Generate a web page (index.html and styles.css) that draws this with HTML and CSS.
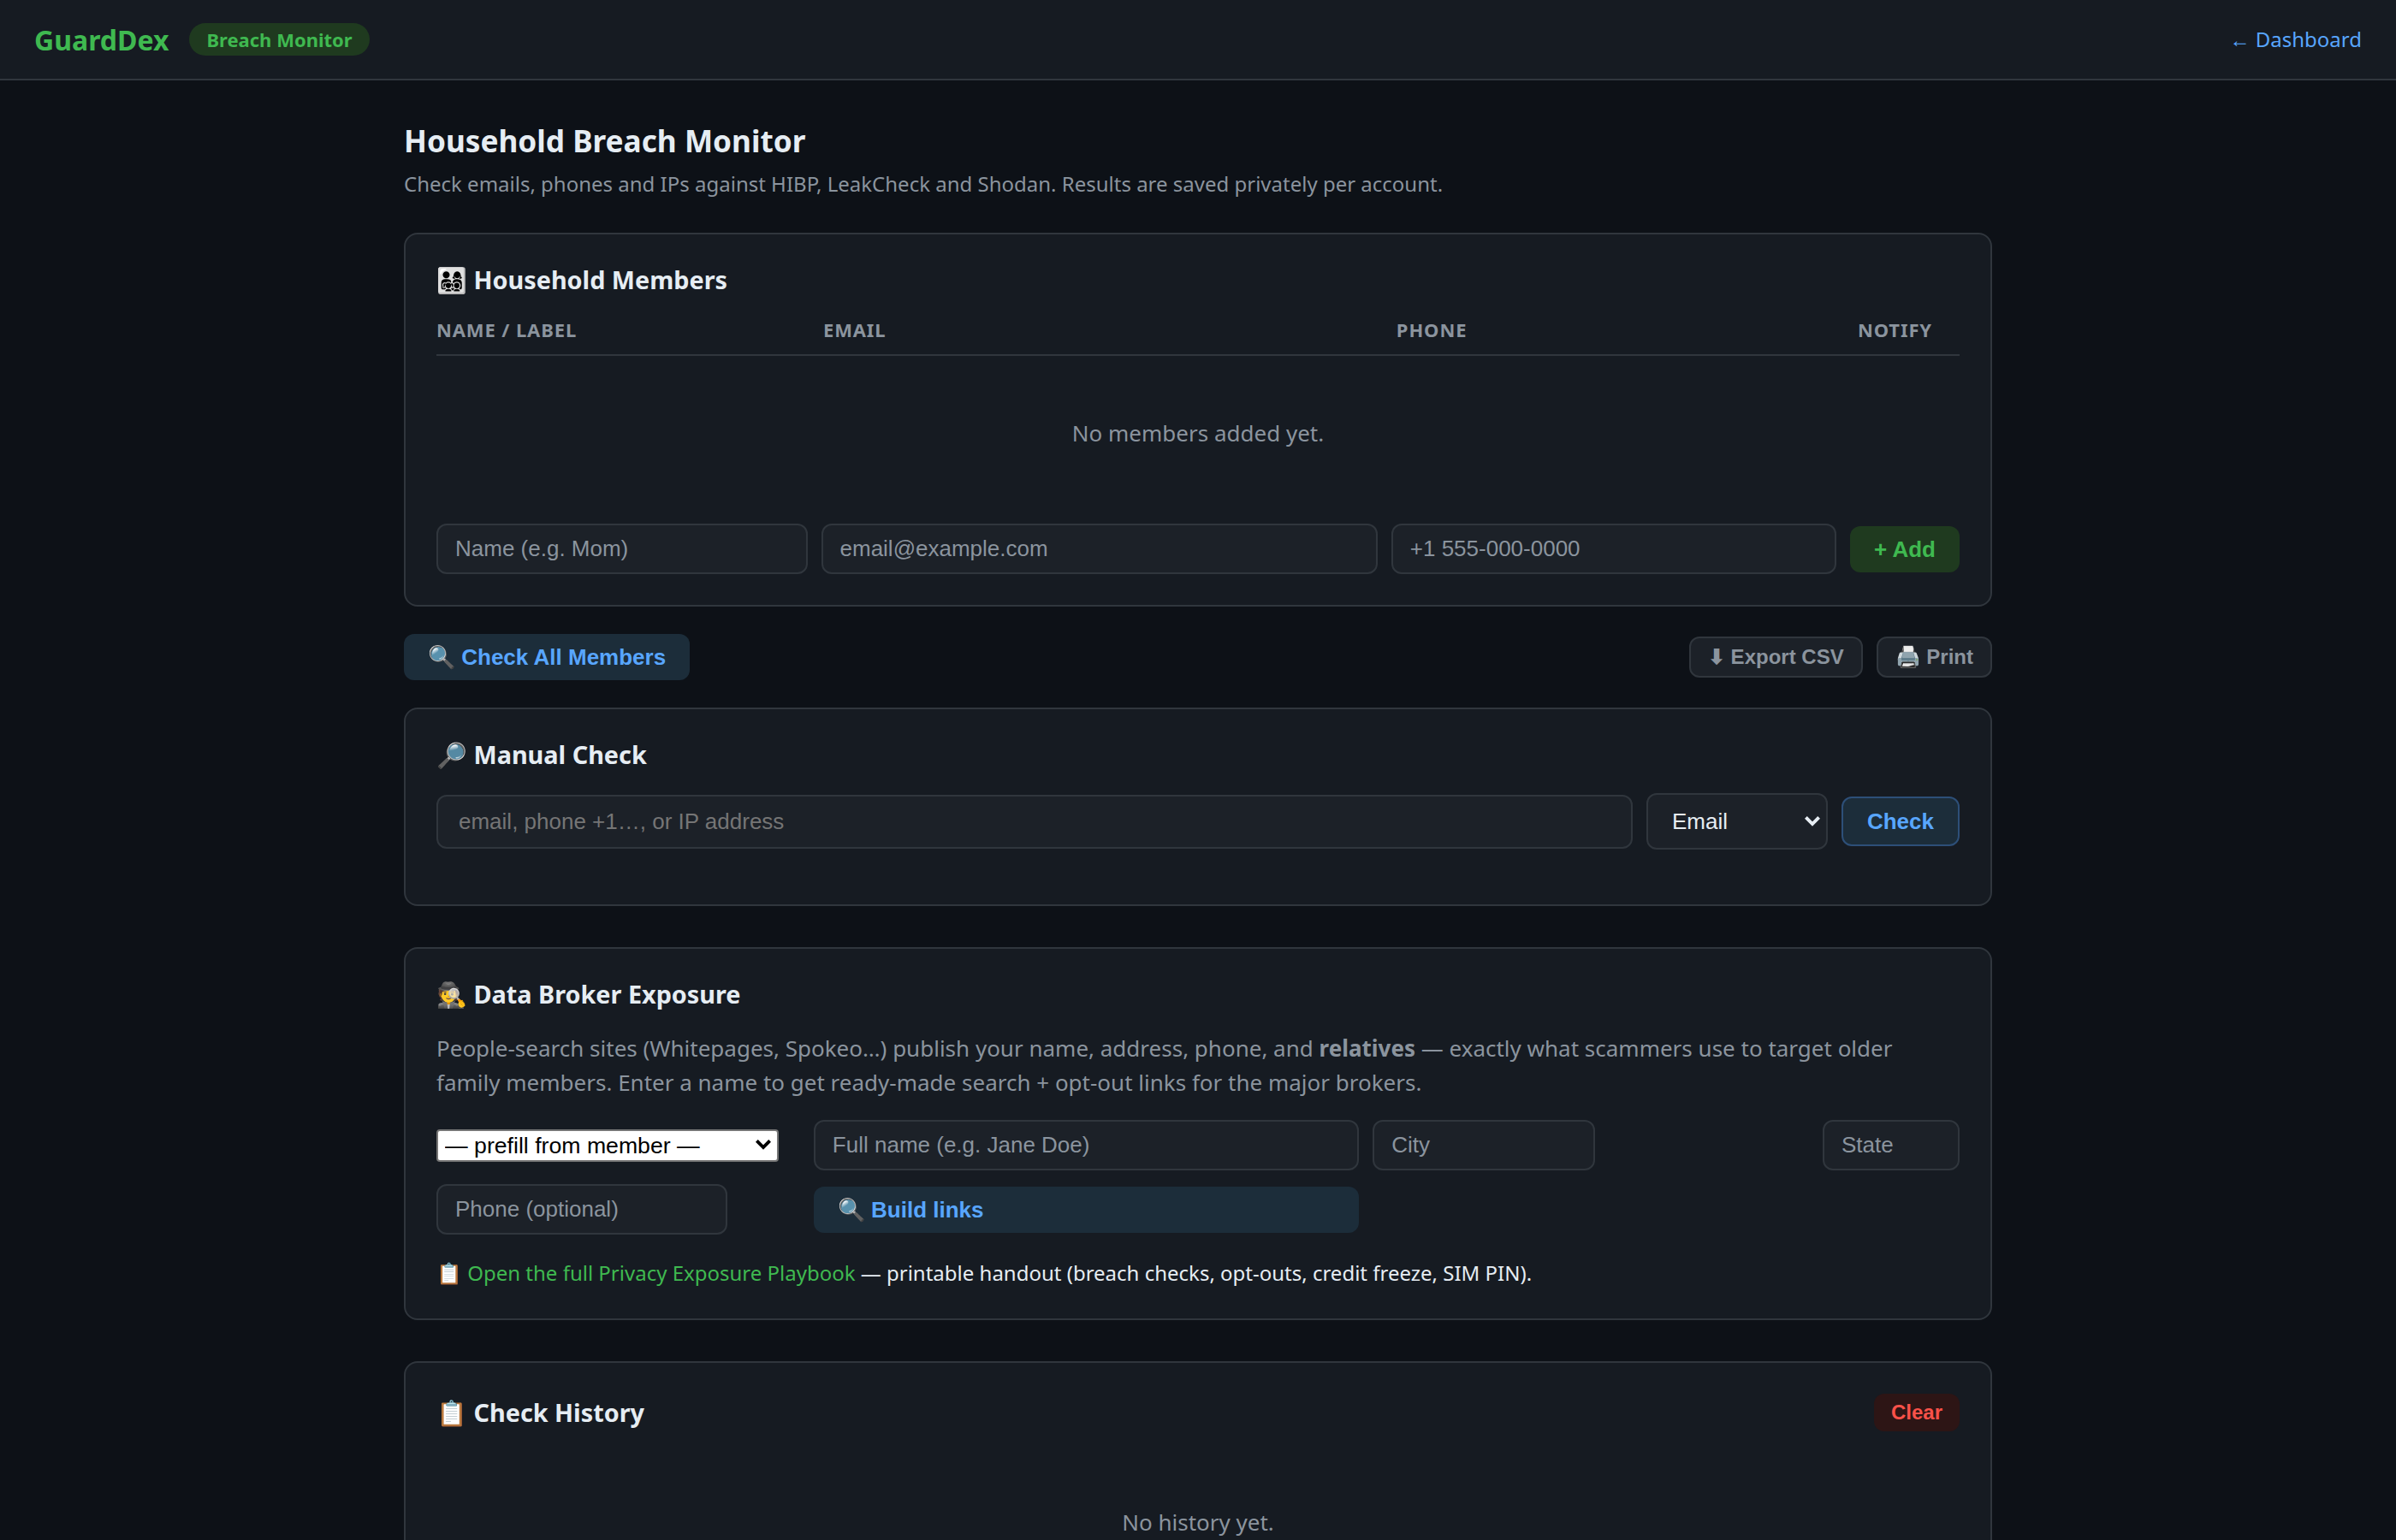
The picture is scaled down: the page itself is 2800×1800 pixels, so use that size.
FILE: index.html
```html
<!DOCTYPE html>
<html lang="en">
<head>
    <meta charset="UTF-8">
    <meta name="viewport" content="width=device-width, initial-scale=1.0">
    <title>GuardDex - Breach Monitor</title>
    <link rel="stylesheet" href="styles.css">
</head>
<body>
    <header class="topbar">
        <span class="logo">GuardDex</span>
        <span class="badge">Breach Monitor</span>
        <a class="back" href="#">← Dashboard</a>
    </header>

    <main class="wrap">
        <h1>Household Breach Monitor</h1>
        <p class="sub">Check emails, phones and IPs against HIBP, LeakCheck and Shodan. Results are saved privately per account.</p>

        <section class="card">
            <h2>👨‍👩‍👧‍👦 Household Members</h2>
            <div class="member-head">
                <span>Name / Label</span>
                <span>Email</span>
                <span>Phone</span>
                <span>Notify</span>
                <span></span>
            </div>
            <div class="empty members-empty">No members added yet.</div>
            <div class="add-row">
                <input type="text" class="field" placeholder="Name (e.g. Mom)">
                <input type="email" class="field" placeholder="email@example.com">
                <input type="tel" class="field" placeholder="+1 555-000-0000">
                <button class="btn btn-green">+ Add</button>
            </div>
        </section>

        <div class="toolbar">
            <button class="btn btn-blue">🔍 Check All Members</button>
            <div class="toolbar-right">
                <button class="btn btn-sm btn-ghost">⬇ Export CSV</button>
                <button class="btn btn-sm btn-ghost">🖨️ Print</button>
            </div>
        </div>

        <section class="card manual">
            <h2>🔎 Manual Check</h2>
            <div class="manual-row">
                <input type="text" class="manual-input" placeholder="email, phone +1…, or IP address">
                <select class="manual-type">
                    <option>Email</option>
                    <option>Phone</option>
                    <option>IP Address</option>
                </select>
                <button class="btn btn-blue btn-outline">Check</button>
            </div>
            <div class="manual-result"></div>
        </section>

        <section class="card">
            <h2>🕵️ Data Broker Exposure</h2>
            <p class="intro">People-search sites (Whitepages, Spokeo…) publish your name, address, phone, and <strong>relatives</strong> — exactly what scammers use to target older family members. Enter a name to get ready-made search + opt-out links for the major brokers.</p>
            <div class="add-row broker-row">
                <select class="prefill">
                    <option>— prefill from member —</option>
                </select>
                <input type="text" class="field" placeholder="Full name (e.g. Jane Doe)">
                <input type="text" class="field city" placeholder="City">
                <input type="text" class="field state" placeholder="State">
                <input type="text" class="field phone" placeholder="Phone (optional)">
                <button class="btn btn-blue">🔍 Build links</button>
            </div>
            <div class="playbook">📋 <a href="#">Open the full Privacy Exposure Playbook</a> — printable handout (breach checks, opt-outs, credit freeze, SIM PIN).</div>
        </section>

        <section class="card">
            <div class="card-head">
                <h2>📋 Check History</h2>
                <button class="btn btn-sm btn-red">Clear</button>
            </div>
            <div class="empty">No history yet.</div>
        </section>
    </main>
</body>
</html>
```
FILE: styles.css
```css
:root {
    --bg: #0d1117;
    --surface: #161b22;
    --surface2: #1c2128;
    --border: #30363d;
    --text: #e6edf3;
    --muted: #8b949e;
    --green: #3fb950;
    --blue: #58a6ff;
    --red: #f85149;
}
* {
    box-sizing: border-box;
    margin: 0;
    padding: 0;
}
html {
    zoom: 2;
}
body {
    background: var(--bg);
    color: var(--text);
    font-family: "Noto Sans", sans-serif;
    font-size: 14px;
    height: 900px;
    overflow: hidden;
}
a {
    text-decoration: none;
}
button, input, select {
    font-family: "Liberation Sans", Arial, sans-serif;
}

/* header */
.topbar {
    display: flex;
    align-items: center;
    gap: 12px;
    height: 47px;
    padding: 0 20px;
    background: var(--surface);
    border-bottom: 1px solid var(--border);
}
.logo {
    font-size: 16px;
    font-weight: 700;
    color: var(--green);
}
.badge {
    padding: 2px 10px;
    border-radius: 10px;
    background: #1f3a1f;
    color: var(--green);
    font-size: 11px;
    font-weight: 700;
}
.back {
    margin-left: auto;
    color: var(--blue);
    font-size: 12px;
    line-height: 18px;
}

/* page */
.wrap {
    max-width: 960px;
    margin: 0 auto;
    padding: 24px 16px;
}
h1 {
    margin-bottom: 6px;
    font-size: 1.1rem;
    font-weight: 700;
    line-height: 22px;
}
.sub {
    margin-bottom: 20px;
    color: var(--muted);
    font-size: 12px;
    line-height: 17px;
}
.card {
    padding: 18px;
    background: var(--surface);
    border: 1px solid var(--border);
    border-radius: 8px;
}
.card + .card {
    margin-top: 24px;
}
h2 {
    margin-bottom: 13px;
    font-size: 0.9rem;
    font-weight: 700;
    line-height: 17px;
}
.empty {
    padding: 32px;
    text-align: center;
    color: var(--muted);
    font-size: 13px;
    line-height: 18px;
}

/* buttons and fields */
.btn {
    display: inline-flex;
    align-items: center;
    gap: 6px;
    padding: 6px 14px;
    border: none;
    border-radius: 6px;
    font-size: 13px;
    font-weight: 600;
    line-height: 15px;
    cursor: pointer;
}
.btn-sm {
    padding: 4px 10px;
    font-size: 12px;
    line-height: 14px;
}
.btn-green {
    background: #1f3a1f;
    color: var(--green);
}
.btn-blue {
    background: #1c2d3a;
    color: var(--blue);
}
.btn-red {
    background: #2d1515;
    color: var(--red);
}
.btn-ghost {
    background: var(--surface2);
    border: 1px solid var(--border);
    color: var(--muted);
}
.btn-outline {
    border: 1px solid #2d4f78;
}
.field {
    width: 100%;
    padding: 6px 10px;
    background: var(--surface2);
    border: 1px solid var(--border);
    border-radius: 6px;
    color: var(--text);
    font-size: 13px;
}
.field::placeholder {
    color: var(--muted);
}

/* members */
.member-head {
    display: grid;
    grid-template-columns: 1fr 1.5fr 1.2fr auto 8px;
    gap: 8px;
    padding-bottom: 7px;
    border-bottom: 1px solid var(--border);
    color: var(--muted);
    font-size: 11px;
    font-weight: 700;
    line-height: 15px;
    letter-spacing: 0.04em;
    text-transform: uppercase;
}
.members-empty {
    padding: 36px 0 44px;
}
.add-row {
    display: grid;
    grid-template-columns: 1fr 1.5fr 1.2fr auto;
    gap: 8px;
    align-items: center;
}
.toolbar {
    display: flex;
    align-items: center;
    justify-content: space-between;
    margin: 16px 0;
}
.toolbar-right {
    display: flex;
    gap: 8px;
}

/* manual check */
.manual h2 {
    margin-bottom: 14px;
}
.manual-row {
    display: flex;
    align-items: center;
    gap: 8px;
}
.manual-input, .manual-type {
    background: var(--surface2);
    border: 1px solid var(--border);
    border-radius: 6px;
    color: var(--text);
    font-size: 13px;
}
.manual-input {
    flex: 1;
    padding: 7px 12px;
}
.manual-type {
    width: 106px;
    height: 33px;
    padding: 7px 14px;
    appearance: none;
    background: var(--surface2) url("data:image/svg+xml,%3Csvg xmlns='http://www.w3.org/2000/svg' viewBox='0 0 9.2 6.2'%3E%3Cpath d='M.7 .7L4.6 4.7L8.5 .7' fill='none' stroke='%23e6edf3' stroke-width='2'/%3E%3C/svg%3E") no-repeat right 3.5px center / 9.2px 6.2px;
}
.manual-result {
    margin-top: 14px;
}

/* data brokers */
.intro {
    margin-bottom: 12px;
    color: var(--muted);
    font-size: 13px;
    line-height: 20px;
}
.prefill {
    width: 200px;
    height: 19px;
    padding: 0 4px;
    appearance: none;
    background: #fff url("data:image/svg+xml,%3Csvg xmlns='http://www.w3.org/2000/svg' viewBox='0 0 9.2 6.2'%3E%3Cpath d='M.7 .7L4.6 4.7L8.5 .7' fill='none' stroke='%23000' stroke-width='2'/%3E%3C/svg%3E") no-repeat right 3.5px center / 9.2px 6.2px;
    border: 1px solid #767676;
    border-radius: 2px;
    color: #000;
    font-size: 13.333px;
}
.city {
    width: 130px;
}
.state {
    width: 80px;
}
.phone {
    width: 170px;
}
.playbook {
    margin-top: 14px;
    font-size: 12px;
    line-height: 17px;
}
.playbook a {
    color: var(--green);
}

/* history */
.card-head {
    display: flex;
    align-items: center;
    justify-content: space-between;
    margin-bottom: 12px;
}
.card-head h2 {
    margin-bottom: 0;
}
```
